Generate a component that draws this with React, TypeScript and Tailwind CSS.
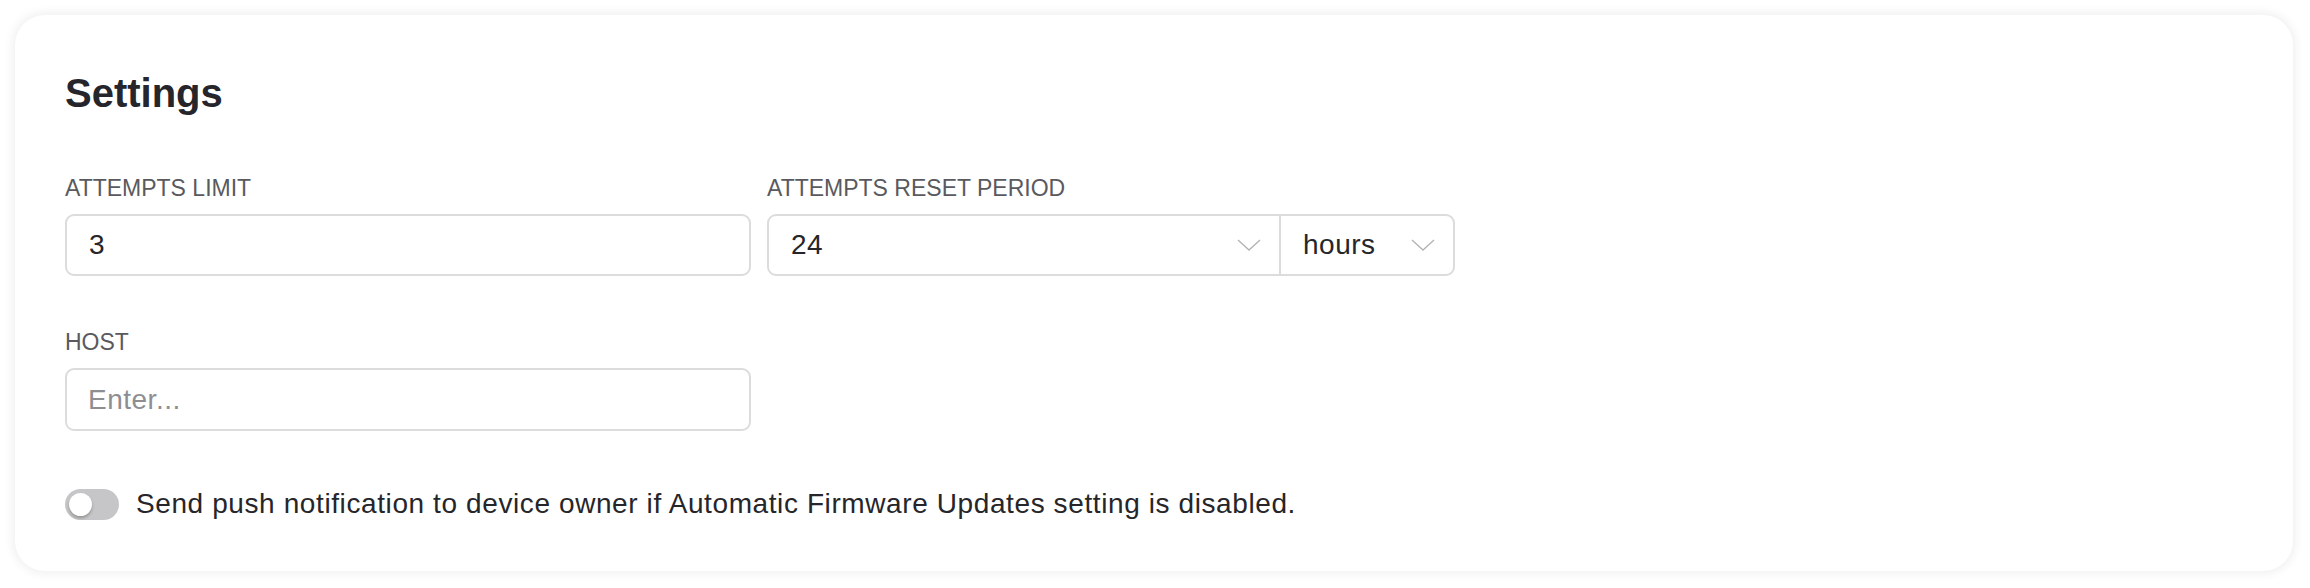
import React, { useState } from "react";

function Chevron() {
    return (
        <svg width="24" height="12" viewBox="0 0 24 12" fill="none" className="shrink-0">
            <polyline points="1,1 12,11 23,1" stroke="#b4b4b4" strokeWidth="1.4" />
        </svg>
    );
}

export default function App() {
    const [limit, setLimit] = useState("3");
    const [host, setHost] = useState("");
    const [notify, setNotify] = useState(false);

    return (
        <div className="w-[2310px] h-[588px] bg-white pt-[15px] pl-[15px] font-['Liberation_Sans',Arial,sans-serif]">
            <div className="w-[2278px] h-[556px] rounded-[30px] bg-white shadow-[0_0_10px_3px_rgba(0,0,0,0.06)] pt-[58px] px-[50px]">
                <h2 className="text-[40px] leading-none font-bold text-[#25252b]">Settings</h2>

                <div className="flex gap-[16px] mt-[64px]">
                    <div className="w-[686px]">
                        <div className="text-[23px] leading-none text-[#5a5a5e]">ATTEMPTS LIMIT</div>
                        <input
                            className="mt-[14px] w-full h-[62px] border-2 border-[#dcdcdc] rounded-[9px] px-[22px] text-[28px] tracking-[0.5px] text-[#26262a] outline-none"
                            value={limit}
                            onChange={(e) => setLimit(e.target.value)}
                        />
                    </div>
                    <div className="w-[688px]">
                        <div className="text-[23px] leading-none text-[#5a5a5e]">ATTEMPTS RESET PERIOD</div>
                        <div className="mt-[14px] flex h-[62px] border-2 border-[#dcdcdc] rounded-[9px] text-[28px] tracking-[0.5px] text-[#26262a]">
                            <div className="w-[512px] flex items-center justify-between pl-[22px] pr-[18px] border-r-2 border-[#dcdcdc]">
                                <span>24</span>
                                <Chevron />
                            </div>
                            <div className="flex-1 flex items-center justify-between pl-[22px] pr-[18px]">
                                <span>hours</span>
                                <Chevron />
                            </div>
                        </div>
                    </div>
                </div>

                <div className="w-[686px] mt-[55px]">
                    <div className="text-[23px] leading-none text-[#5a5a5e]">HOST</div>
                    <input
                        className="mt-[14px] w-full h-[63px] border-2 border-[#dcdcdc] rounded-[9px] px-[21px] text-[28px] tracking-[0.5px] text-[#26262a] placeholder:text-[#8e8e92] outline-none"
                        placeholder="Enter..."
                        value={host}
                        onChange={(e) => setHost(e.target.value)}
                    />
                </div>

                <div className="flex items-center gap-[17px] mt-[52px]">
                    <button
                        onClick={() => setNotify(!notify)}
                        className={`relative w-[54px] h-[31px] rounded-full shrink-0 ${
                            notify ? "bg-[#3b82f6]" : "bg-[#c6c6c8]"
                        }`}>
                        <span
                            className={`absolute top-[4px] w-[23px] h-[23px] rounded-full bg-white shadow-[0_2px_3px_rgba(0,0,0,0.25)] ${
                                notify ? "left-[27px]" : "left-[4px]"
                            }`}
                        />
                    </button>
                    <span className="text-[28px] tracking-[0.6px] text-[#26262a]">
                        Send push notification to device owner if Automatic Firmware Updates setting is disabled.
                    </span>
                </div>
            </div>
        </div>
    );
}
